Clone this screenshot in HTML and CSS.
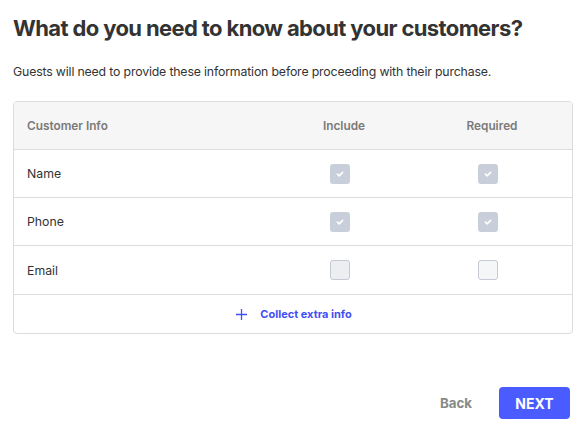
FILE: index.html
```html
<!DOCTYPE html>
<html>
<head>
<meta charset="utf-8">
<link rel="stylesheet" href="styles.css">
</head>
<body>
<div class="page">
  <h1 class="title">What do you need to know about your customers?</h1>
  <p class="subtitle">Guests will need to provide these information before proceeding with their purchase.</p>
  <div class="table">
    <div class="row head">
      <div class="c-info">Customer Info</div>
      <div class="c-col">Include</div>
      <div class="c-col">Required</div>
    </div>
    <div class="row">
      <div class="c-info">Name</div>
      <div class="c-col"><span class="cb checked"><svg viewBox="0 0 10 10" width="10" height="10"><path d="M2.4 5.2 L4.2 6.9 L7.6 3.3" fill="none" stroke="#fff" stroke-width="1.7" stroke-linecap="round" stroke-linejoin="round"/></svg></span></div>
      <div class="c-col"><span class="cb checked"><svg viewBox="0 0 10 10" width="10" height="10"><path d="M2.4 5.2 L4.2 6.9 L7.6 3.3" fill="none" stroke="#fff" stroke-width="1.7" stroke-linecap="round" stroke-linejoin="round"/></svg></span></div>
    </div>
    <div class="row">
      <div class="c-info">Phone</div>
      <div class="c-col"><span class="cb checked"><svg viewBox="0 0 10 10" width="10" height="10"><path d="M2.4 5.2 L4.2 6.9 L7.6 3.3" fill="none" stroke="#fff" stroke-width="1.7" stroke-linecap="round" stroke-linejoin="round"/></svg></span></div>
      <div class="c-col"><span class="cb checked"><svg viewBox="0 0 10 10" width="10" height="10"><path d="M2.4 5.2 L4.2 6.9 L7.6 3.3" fill="none" stroke="#fff" stroke-width="1.7" stroke-linecap="round" stroke-linejoin="round"/></svg></span></div>
    </div>
    <div class="row tall">
      <div class="c-info">Email</div>
      <div class="c-col"><span class="cb empty dark"></span></div>
      <div class="c-col"><span class="cb empty"></span></div>
    </div>
    <div class="foot">
      <svg class="plus" viewBox="0 0 11 11" width="11" height="11"><path d="M5.5 0 V11 M0 5.5 H11" stroke="#3f51f5" stroke-width="1.3" fill="none"/></svg>
      <span class="extra">Collect extra info</span>
    </div>
  </div>
  <div class="actions">
    <button class="btn back">Back</button>
    <button class="btn next">NEXT</button>
  </div>
</div>
</body>
</html>
```

FILE: styles.css
```css
* { box-sizing: border-box; }
html, body { margin: 0; padding: 0; background: #fff; }
body { font-family: Inter, "Noto Sans", sans-serif; color: #333; }
.page { padding: 13px 14px 0 13px; display: flex; flex-direction: column; }
.title { margin: 0; font-size: 22px; line-height: 30px; font-weight: 700; color: #333; letter-spacing: -0.62px; }
.subtitle { margin: 20px 0 0; font-size: 12.3px; line-height: 18px; color: #333; letter-spacing: -0.16px; }
.table { margin-top: 20px; border: 1px solid #dcdcdc; border-radius: 4px; overflow: hidden; }
.row { display: grid; grid-template-columns: 1fr 148px 148px; padding-right: 10px; height: 48px; align-items: center; border-bottom: 1px solid #dcdcdc; font-size: 12.3px; color: #333; }
.row.tall { height: 49px; }
.row.head { background: #f6f6f6; font-weight: 600; color: #7a7a7a; font-size: 11.8px; }
.row.head .c-col { padding-left: 8px; }
.c-info { padding-left: 13px; }
.c-col { display: flex; justify-content: center; }
.cb { width: 20px; height: 20px; border-radius: 3px; display: flex; align-items: center; justify-content: center; }
.cb.checked { background: #c9cedb; }
.cb.empty { border: 1px solid #c5c9d4; background: #f5f6f8; }
.cb.empty.dark { background: #eceef2; }
.foot { height: 38px; display: flex; align-items: center; justify-content: center; gap: 13px; padding-left: 2px; }
.plus { display: block; }
.extra { font-size: 11px; font-weight: 700; color: #3f51f5; }
.actions { display: flex; justify-content: flex-end; align-items: center; margin-top: 53px; gap: 27px; padding-right: 3px; }
.btn { font-family: Inter, "Noto Sans", sans-serif; border: none; font-weight: 700; cursor: pointer; }
.back { background: none; color: #888; padding: 0; font-size: 13.3px; }
.next { background: #4a5cff; color: #fff; width: 71px; height: 32px; border-radius: 4px; padding: 0; font-size: 14px; }
```
